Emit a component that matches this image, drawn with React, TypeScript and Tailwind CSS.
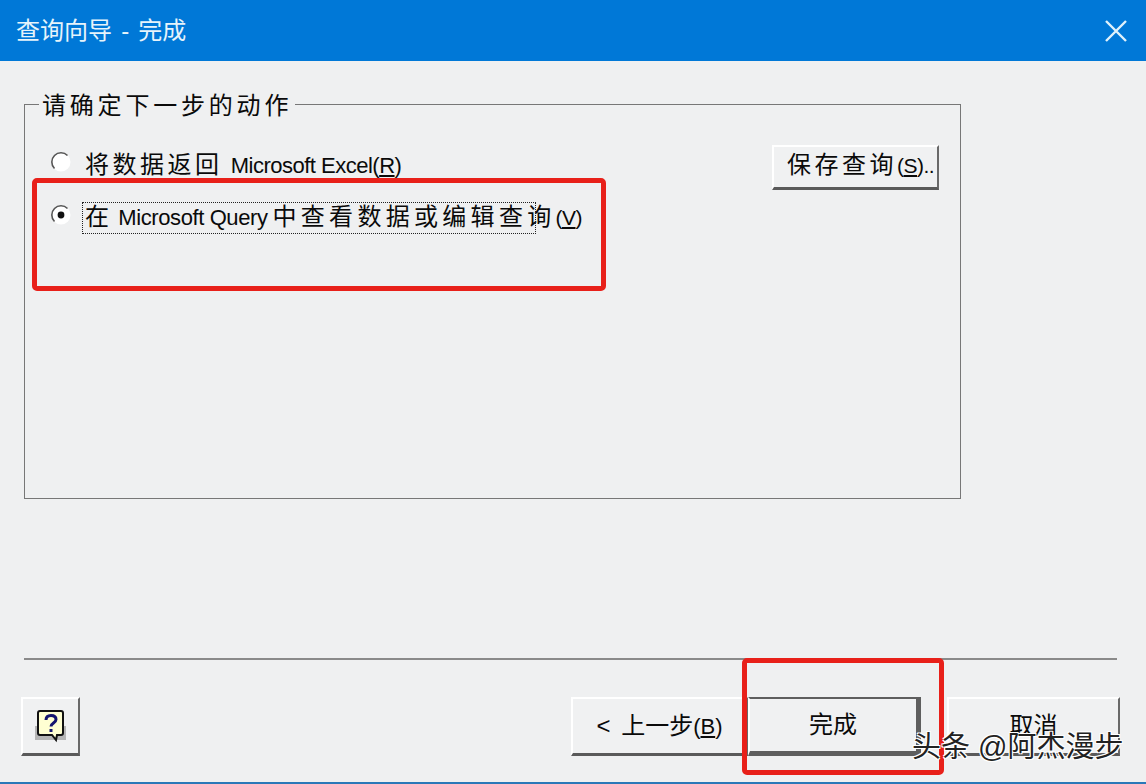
const cjk = "font-['Liberation_Sans','Noto_Sans_CJK_SC',sans-serif]";
const raised =
  "border-t-2 border-l-2 border-t-white border-l-white border-r-2 border-b-[3px] border-r-[#696969] border-b-[#5a5a5a] bg-[#f0f1f2]";

function Radio({ checked }: { checked?: boolean }) {
  return (
    <svg viewBox="0 0 20 20" className={checked ? "-mt-px h-5 w-5 shrink-0 self-start" : "-mt-[2px] h-5 w-5 shrink-0 self-start"}>
      <circle cx="10" cy="10" r="9.5" fill="#fff" />
      <path d="M3.5 16.5A9 9 0 0 1 16.5 3.5" fill="none" stroke="#555" strokeWidth="1.6" />
      {checked && <circle cx="10" cy="10" r="3.4" fill="#111" />}
    </svg>
  );
}

function HelpIcon() {
  return (
    <svg viewBox="0 0 32 34" className="h-[34px] w-[32px]">
      <rect x="0" y="17" width="31" height="14" fill="#b5b5b5" />
      <path
        d="M5 2h21a2 2 0 0 1 2 2v20a2 2 0 0 1-2 2h-4l-1 5-4-5H5a2 2 0 0 1-2-2V4a2 2 0 0 1 2-2z"
        fill="#ffffd2"
        stroke="#111"
        strokeWidth="2"
      />
      <path
        d="M11 11c0-3 2-4.500 5-4.500s5 1.500 5 4c0 3.500-5 3.500-5 7"
        fill="none"
        stroke="#15156e"
        strokeWidth="3"
      />
      <rect x="14.500" y="20" width="3" height="3" fill="#15156e" />
    </svg>
  );
}

export default function App() {
  return (
    <div className={`relative flex h-[784px] w-[1146px] flex-col overflow-hidden bg-[#eff0f1] text-[#0a0a0a] ${cjk}`}>
      <header className="flex h-[61px] shrink-0 items-center justify-between pl-4 pr-[19px] bg-[#0078d7] text-[#e6f4fb]">
        <span className="text-[24px] leading-none [word-spacing:2.5px]">查询向导 - 完成</span>
        <svg viewBox="0 0 22 22" className="h-[22px] w-[22px]" fill="none" stroke="#dff2fb" strokeWidth="2.4">
          <path d="M1 1l20 20M21 1L1 21" />
        </svg>
      </header>

      <main className="flex flex-1 flex-col pl-6">
        <fieldset className="mt-[28px] h-[410px] w-[937px] border border-[#777]">
          <legend className="ml-[14px] px-[3px] pt-[4px] text-[24px] leading-[26px] tracking-[3.8px]">请确定下一步的动作</legend>
          <div className="flex justify-between pl-[26px] pr-[21px]">
            <div className="flex flex-col gap-[29px] pt-[35px]">
              <label className="flex items-center gap-[14px] text-[24px] leading-[22px]">
                <Radio />
                <span className="tracking-[3.5px] [word-spacing:-2px]">
                  将数据返回 <span className="text-[22px] tracking-[-0.5px] [word-spacing:0]">Microsoft Excel(<u>R</u>)</span>
                </span>
              </label>
              <label className="flex items-center gap-[11px] text-[24px] leading-[22px]">
                <Radio checked />
                <span className="relative whitespace-nowrap pl-[3px] tracking-[4.3px] [word-spacing:-6px]">
                  在 <span className="text-[22px] tracking-[-0.4px] [word-spacing:0]">Microsoft Query</span> 中查看数据或编辑查询
                  <span className="text-[21px] tracking-[-0.5px]">
                    (<u>V</u>)
                  </span>
                  <span className="absolute -top-[4px] left-0 h-[32px] w-[454px] border border-dotted border-[#222]" />
                </span>
              </label>
            </div>
            <button className={`mt-[26px] h-[45px] w-[167px] self-start whitespace-nowrap pb-[5px] pl-[13px] text-left text-[24px] leading-none tracking-[3.5px] ${raised}`}>
              保存查询<span className="text-[21px] tracking-[-0.5px]">(<u>S</u>)..</span>
            </button>
          </div>
        </fieldset>

        <hr className="mt-[159px] w-[1093px] border-t-2 border-[#8a8a8a]" />

        <footer className="mt-[37px] flex items-start">
          <button className={`-ml-[3px] flex h-[59px] w-[59px] shrink-0 items-center justify-center ${raised}`}>
            <HelpIcon />
          </button>
          <button className={`ml-[491px] h-[59px] w-[177px] shrink-0 whitespace-nowrap text-[24px] leading-none [word-spacing:4px] ${raised}`}>
            &lt; 上一步<span className="text-[22px]">(<u>B</u>)</span>
          </button>
          <button className="h-[59px] w-[173px] shrink-0 border-2 border-r-[5px] border-b-[5px] border-[#5e5e5e] border-l-white bg-[#f0f1f2] text-[24px] leading-none">
            完成
          </button>
          <button className={`ml-[26px] h-[59px] w-[173px] shrink-0 text-[24px] leading-none ${raised}`}>取消</button>
        </footer>
      </main>

      <div className="h-[2px] shrink-0 bg-[#2a78b8]" />

      {/* red annotation boxes and the watermark lie over the dialog */}
      <div className="absolute left-[32px] top-[178px] h-[113px] w-[574px] rounded-[5px] border-[5px] border-[#e8201a]" />
      <div className="absolute left-[742px] top-[658px] h-[117px] w-[202px] rounded-[5px] border-[5px] border-[#e8201a]" />
      <span className="absolute left-[912px] top-[733px] text-[29px] leading-none text-[#222] [text-shadow:1px_1px_0_#fff,-1px_-1px_0_#fff,1px_-1px_0_#fff,-1px_1px_0_#fff]">
        头条 @阿杰漫步
      </span>
    </div>
  );
}
